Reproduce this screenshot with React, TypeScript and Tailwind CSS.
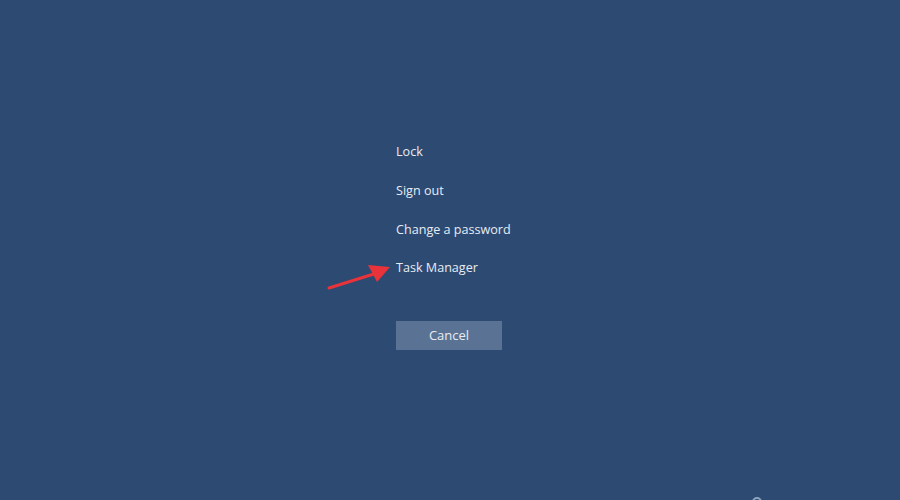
export default function App() {
  const items = ["Lock", "Sign out", "Change a password", "Task Manager"];
  return (
    <div
      className="relative h-[500px] w-[900px] overflow-hidden bg-[#2c4a72]"
      style={{ fontFamily: '"Segoe UI", "Open Sans", "Noto Sans", sans-serif' }}
    >
      <div className="flex flex-col pl-[396px] pt-[133px]">
        {items.map((t) => (
          <div key={t} className="flex h-[38.8px] items-center text-[12.6px] text-[#e8ecf2]">
            {t}
          </div>
        ))}
        <button className="mt-[33px] h-[29px] w-[106px] bg-[#5a7293] text-[13px] text-[#e8ecf2]">
          Cancel
        </button>
      </div>

      {/* red arrow pointing at Task Manager */}
      <svg className="absolute left-[325px] top-[260px]" width="70" height="34" viewBox="0 0 70 34">
        <line x1="4" y1="28" x2="52" y2="13" stroke="#e8333a" strokeWidth="3" strokeLinecap="round" />
        <polygon points="65,7 43,5 52,22" fill="#e8333a" />
      </svg>

      {/* power icon, mostly cut off */}
      <div className="absolute left-[752px] top-[497px] h-[10px] w-[10px] rounded-full border-2 border-[#8fa3bf]" />
    </div>
  );
}
